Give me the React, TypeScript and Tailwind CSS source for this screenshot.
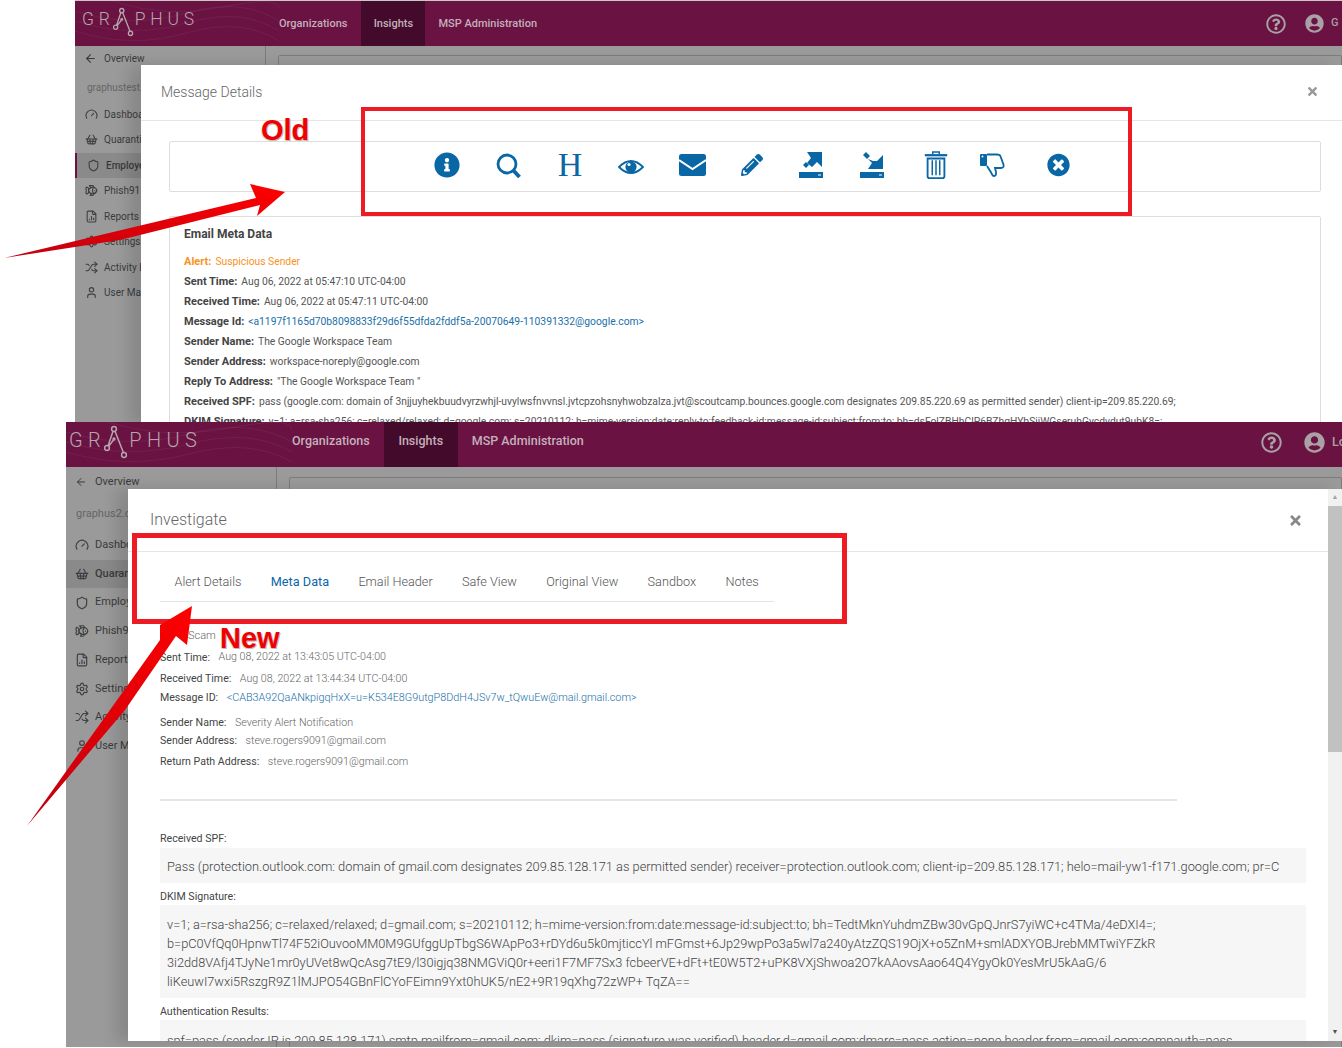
import React from "react";
import { ArrowLeft, Gauge, ShoppingBasket, Shield, Fish, FileChartColumn, Settings, Shuffle, User } from "lucide-react";
import { FaInfoCircle, FaPencilAlt, FaTimesCircle, FaTimes, FaUserCircle, FaRegQuestionCircle } from "react-icons/fa";

const blue = "#0a67a6";

function Waves() {
  return (
    <svg className="absolute inset-0 w-full h-full" viewBox="0 0 220 45" preserveAspectRatio="none" fill="none" stroke="#ffffff" strokeOpacity="0.06">
      <path d="M0 10 Q60 28 120 12 T220 20" />
      <path d="M0 20 Q60 38 120 22 T220 30" />
      <path d="M0 30 Q60 48 120 32 T220 40" />
      <path d="M40 0 Q100 18 160 6 T220 8" />
    </svg>
  );
}

function Logo({ big }: { big?: boolean }) {
  return (
    <div className={big ? "relative flex items-center text-[20px] tracking-[5.4px] text-[#b5a6ae] font-light" : "relative flex items-center text-[17.5px] tracking-[4.8px] text-[#b5a6ae] font-light"}>
      <span>GR</span>
      <svg viewBox="0 0 24 34" className={big ? "w-[24px] h-[34px] -ml-[2px] mr-[1px] mt-[4px]" : "w-[21px] h-[30px] -ml-[2px] mr-[1px] mt-[4px]"} fill="none" stroke="#b5a6ae" strokeWidth="1.5">
        <circle cx="10" cy="4" r="2.4" />
        <circle cx="3" cy="23" r="2.4" />
        <circle cx="20" cy="30" r="2.4" />
        <circle cx="10" cy="14" r="0.9" />
        <path d="M9 6.2 L4 21 M11 6.2 L19.4 27.6 M4.6 21.4 L9.5 15" />
      </svg>
      <span>PHUS</span>
    </div>
  );
}

function SideRow({ icon, label, active, rowClass }: { icon: React.ReactNode; label: string; active?: boolean; rowClass: string }) {
  return (
    <div className={`flex items-center pl-[9px] ${rowClass} ${active ? "bg-[#8a8a8a] font-medium" : ""}`}>
      <span className="w-[14px] flex justify-center text-[#3f3f3f]">{icon}</span>
      <span className="whitespace-nowrap">{label}</span>
    </div>
  );
}

function Meta({ label, children, orange }: { label: string; children: React.ReactNode; orange?: boolean }) {
  return (
    <div className={orange ? "h-5 flex items-center gap-[4px] whitespace-nowrap text-[#f7931e]" : "h-5 flex items-center gap-[4px] whitespace-nowrap text-[#555]"}>
      <b className={orange ? "font-bold text-[11px] text-[#f7931e]" : "font-bold text-[11px] text-[#444]"}>{label}</b>
      <span>{children}</span>
    </div>
  );
}

function NewMeta({ label, children, h, link }: { label: string; children: React.ReactNode; h: string; link?: boolean }) {
  return (
    <div className={`flex items-center whitespace-nowrap gap-[8.5px] ${h}`}>
      <span className="text-[#444] text-[10.6px]">{label}</span>
      <span className={link ? "text-[#1a6fa8] font-light text-[10.8px]" : "text-[#666] font-light text-[10.7px]"}>{children}</span>
    </div>
  );
}

function Search() {
  return (
    <svg viewBox="0 0 25 25" className="w-[25px] h-[25px] -ml-[2px]" fill="none" stroke={blue}>
      <circle cx="11" cy="11" r="9" strokeWidth="2.8" />
      <path d="M17 17 L23.5 24" strokeWidth="3.8" />
    </svg>
  );
}

function Eye() {
  return (
    <svg viewBox="0 0 26 18" className="w-[26px] h-[18px]">
      <path d="M1 9 Q13 -3 25 9 Q13 21 1 9 Z" fill="none" stroke={blue} strokeWidth="1.8" />
      <circle cx="13" cy="9" r="5.6" fill={blue} />
      <circle cx="11" cy="6.5" r="1.6" fill="#fff" />
    </svg>
  );
}

function Envelope() {
  return (
    <svg viewBox="0 0 27 22" className="w-[27px] h-[22px]">
      <rect width="27" height="22" rx="2.5" fill={blue} />
      <path d="M0 6 L13.5 15 L27 6" fill="none" stroke="#fff" strokeWidth="2" />
    </svg>
  );
}

function Upload() {
  return (
    <svg viewBox="0 0 24 26" className="w-[24px] h-[26px]" fill={blue}>
      <polygon points="8,0 23,0 23,15 18,10 13,15 8,11 12,6" />
      <polygon points="4,13 7,10 10,13 7,16" />
      <rect x="0" y="20" width="24" height="6" />
      <rect x="19" y="22.5" width="3" height="1" fill="#fff" />
    </svg>
  );
}

function Download() {
  return (
    <svg viewBox="0 0 24 26" className="w-[24px] h-[26px]" fill={blue}>
      <polygon points="23,3 23,17 8,17 12,11 8,7 13,9 17,9" />
      <polygon points="3,3 6,0 10,4 7,7" />
      <rect x="0" y="20" width="24" height="6" />
      <rect x="19" y="22.5" width="3" height="1" fill="#fff" />
    </svg>
  );
}

function Trash() {
  return (
    <svg viewBox="0 0 24 30" className="w-[24px] h-[28px]" fill="none" stroke={blue} strokeWidth="2">
      <path d="M8.5 3.5 V1.2 H15.5 V3.5" strokeWidth="1.6" />
      <path d="M0 4.5 H24" strokeWidth="2.4" />
      <path d="M3 8 V27 Q3 29 5 29 H19 Q21 29 21 27 V8 Z" />
      <path d="M8 10 V26 M12 10 V26 M16 10 V26" strokeWidth="1.6" />
    </svg>
  );
}

function ThumbDown() {
  return (
    <svg viewBox="0 0 25 24" className="w-[25px] h-[24px]">
      <rect x="0" y="1" width="7" height="12" rx="1" fill={blue} />
      <circle cx="2.5" cy="3.5" r="0.9" fill="#fff" />
      <path d="M7 1.5 H17 Q20 1.5 20.6 3.5 L23.6 12 Q24 15 21 15 H15 L16 19 Q16.4 23 14 23 Q12.4 23 11.4 20 L7 13" fill="none" stroke={blue} strokeWidth="1.8" />
    </svg>
  );
}

function OldToolbar() {
  return (
    <div className="mt-[20px] ml-[28px] w-[1152px] h-[51px] border border-[#ddd] rounded-[2px] flex items-center pl-[264px] pb-[3px] text-[#0a67a6]">
      <span className="w-[26px] flex justify-center"><FaInfoCircle className="w-[26px] h-[26px]" /></span>
      <span className="w-[26px] ml-[36px] flex justify-center"><Search /></span>
      <span className="w-[26px] ml-[35px] flex justify-center font-['Liberation_Serif',serif] text-[34px] leading-none">H</span>
      <span className="w-[26px] ml-[35px] flex justify-center mt-[3px]"><Eye /></span>
      <span className="w-[27px] ml-[35px] flex justify-center"><Envelope /></span>
      <span className="w-[24px] ml-[34px] flex justify-center"><FaPencilAlt className="w-[22px] h-[24px]" /></span>
      <span className="w-[24px] ml-[35px] flex justify-center"><Upload /></span>
      <span className="w-[24px] ml-[37px] flex justify-center"><Download /></span>
      <span className="w-[24px] ml-[40px] flex justify-center"><Trash /></span>
      <span className="w-[25px] ml-[32px] flex justify-center"><ThumbDown /></span>
      <span className="w-[24px] ml-[41px] flex justify-center"><FaTimesCircle className="w-[23px] h-[24px]" /></span>
    </div>
  );
}

function TopShot() {
  const row = "h-[25.5px] text-[10px] gap-[6px]";
  return (
    <section className="absolute left-[75px] top-[1px] w-[1267px] h-[421px] overflow-hidden bg-[#9a9a9a]">
      <header className="h-[45px] bg-[#6a1242] flex items-center text-[11px] text-[#c4b0bc] font-medium">
        <div className="relative w-[204px] pl-[7px] pb-[8px] h-full flex items-center"><Waves /><Logo /></div>
        <span className="pt-[1px]">Organizations</span>
        <span className="ml-[14px] w-[64px] h-full bg-[#430a2b] flex items-center justify-center pt-[1px]">Insights</span>
        <span className="ml-[13px] pt-[1px]">MSP Administration</span>
        <div className="ml-auto flex items-center text-[#aaa0a6]">
          <FaRegQuestionCircle className="w-[20px] h-[20px] mr-[19px]" />
          <FaUserCircle className="w-[19px] h-[19px] mr-[7px]" />
          <span className="w-[11px]">G</span>
        </div>
      </header>
      <div className="flex text-[#3a3a3a]">
        <aside className="w-[191px] h-[376px] border-r border-[#7c7c7c]">
          <div className="flex items-center pl-[9px] h-[25px] text-[10px]">
            <ArrowLeft className="w-[13px] h-[13px] mr-[7px]" /> Overview
          </div>
          <div className="pl-[12px] h-[30.5px] pt-[9px] text-[10px] text-[#666]">graphustest.com</div>
          <SideRow icon={<Gauge size={13} />} label="Dashboard" rowClass={row} />
          <SideRow icon={<ShoppingBasket size={13} />} label="Quarantine" rowClass={row} />
          <SideRow icon={<Shield size={13} />} label="Employee Awareness" active rowClass={`${row} border-l-2 border-[#6a1242] pl-[7px]`} />
          <SideRow icon={<Fish size={13} />} label="Phish911" rowClass={row} />
          <SideRow icon={<FileChartColumn size={13} />} label="Reports" rowClass={row} />
          <SideRow icon={<Settings size={13} />} label="Settings" rowClass={row} />
          <SideRow icon={<Shuffle size={13} />} label="Activity Log" rowClass={row} />
          <SideRow icon={<User size={13} />} label="User Management" rowClass={row} />
        </aside>
        <div className="flex-1 pl-[12px] pt-[9px]">
          <div className="h-full border border-[#7c7c7c] rounded-[2px]" />
        </div>
      </div>

      <div className="absolute left-[66px] top-[64px] right-0 h-[360px] bg-white shadow-[-12px_0_14px_rgba(0,0,0,0.12)]">
        <div className="h-[56px] border-b border-[#e5e5e5] flex items-center justify-between pl-[20px] pr-[24px]">
          <h2 className="text-[14px] text-[#666] font-light">Message Details</h2>
          <FaTimes className="w-[11px] h-[13px] text-[#999] -mt-[2px]" />
        </div>
        <OldToolbar />
        <div className="mt-[24px] ml-[28px] w-[1152px] h-[220px] border border-[#ddd] rounded-[2px] pl-[14px] pt-[3px] text-[10.3px]">
          <div className="h-[27px] flex items-center font-bold text-[12px] text-[#444]">Email Meta Data</div>
          <div className="h-[5px]" />
          <Meta label="Alert:" orange>Suspicious Sender</Meta>
          <Meta label="Sent Time:">Aug 06, 2022 at 05:47:10 UTC-04:00</Meta>
          <Meta label="Received Time:">Aug 06, 2022 at 05:47:11 UTC-04:00</Meta>
          <Meta label="Message Id:"><span className="text-[#1a6fa8]">&lt;a1197f1165d70b8098833f29d6f55dfda2fddf5a-20070649-110391332@google.com&gt;</span></Meta>
          <Meta label="Sender Name:">The Google Workspace Team</Meta>
          <Meta label="Sender Address:">workspace-noreply@google.com</Meta>
          <Meta label="Reply To Address:">"The Google Workspace Team "</Meta>
          <Meta label="Received SPF:">pass (google.com: domain of 3njjuyhekbuudvyrzwhjl-uvylwsfnvvnsl.jvtcpzohsnyhwobzalza.jvt@scoutcamp.bounces.google.com designates 209.85.220.69 as permitted sender) client-ip=209.85.220.69;</Meta>
          <Meta label="DKIM Signature:">v=1; a=rsa-sha256; c=relaxed/relaxed; d=google.com; s=20210112; h=mime-version:date:reply-to:feedback-id:message-id:subject:from:to; bh=dsFolZBHhClP6BZhgHYbSjjWGseruhGycdvdut9ubK8=;</Meta>
        </div>
      </div>
    </section>
  );
}

function Tabs() {
  const tabs = ["Alert Details", "Meta Data", "Email Header", "Safe View", "Original View", "Sandbox", "Notes"];
  return (
    <div className="ml-[32px] w-[614px] h-[50px] border-b border-[#e5e5e5] flex items-center pl-[14.5px] pt-[11px] gap-[29.3px] text-[12.7px] font-light text-[#555]">
      {tabs.map((t) => (
        <span key={t} className={t === "Meta Data" ? "text-[#0a67a6] font-normal" : ""}>{t}</span>
      ))}
    </div>
  );
}

function BottomShot() {
  const row = "h-[28.7px] text-[11px] gap-[6px]";
  const box = "w-[1146px] bg-[#f6f6f6] px-[7px] flex flex-col justify-center text-[#444] font-light whitespace-nowrap leading-[19px]";
  return (
    <section className="absolute left-[66px] top-[422px] w-[1276px] h-[625px] overflow-hidden bg-[#9a9a9a]">
      <header className="h-[45px] bg-[#6a1242] flex items-center text-[12.5px] font-medium text-[#c4b0bc]">
        <div className="relative w-[226px] pl-[3px] pb-[9px] h-full flex items-center"><Waves /><Logo big /></div>
        <span className="pb-[6px]">Organizations</span>
        <span className="ml-[14px] w-[74px] h-full bg-[#430a2b] flex items-center justify-center pb-[6px]">Insights</span>
        <span className="ml-[14px] pb-[6px]">MSP Administration</span>
        <div className="ml-auto flex items-center text-[#aaa0a6] pb-[5px]">
          <FaRegQuestionCircle className="w-[21px] h-[21px] mr-[22px]" />
          <FaUserCircle className="w-[21px] h-[21px] mr-[7px]" />
          <span className="w-[10px] overflow-hidden">Lo</span>
        </div>
      </header>
      <div className="flex text-[#3a3a3a]">
        <aside className="w-[211px] h-[580px] border-r border-[#7c7c7c]">
          <div className="flex items-center pl-[9px] h-[30px] text-[11px]">
            <ArrowLeft className="w-[12px] h-[12px] mr-[8px]" /> Overview
          </div>
          <div className="pl-[10px] h-[34px] pt-[9px] text-[11px] text-[#666]">graphus2.com</div>
          <SideRow icon={<Gauge size={14} />} label="Dashboard" rowClass={row} />
          <SideRow icon={<ShoppingBasket size={14} />} label="Quarantine" active rowClass={row} />
          <SideRow icon={<Shield size={14} />} label="Employee Awareness" rowClass={row} />
          <SideRow icon={<Fish size={14} />} label="Phish911" rowClass={row} />
          <SideRow icon={<FileChartColumn size={14} />} label="Reports" rowClass={row} />
          <SideRow icon={<Settings size={14} />} label="Settings" rowClass={row} />
          <SideRow icon={<Shuffle size={14} />} label="Activity Log" rowClass={row} />
          <SideRow icon={<User size={14} />} label="User Management" rowClass={row} />
        </aside>
        <div className="flex-1 pl-[12px] pt-[10px]">
          <div className="h-[600px] border border-[#7c7c7c] rounded-[2px]" />
        </div>
      </div>

      <div className="absolute left-[62px] top-[67px] right-0 h-[552px] bg-white shadow-[-12px_0_14px_rgba(0,0,0,0.12)] flex">
        <div className="flex-1 overflow-hidden">
          <div className="h-[63px] border-b border-[#e5e5e5] flex items-center justify-between pl-[22px] pr-[26px]">
            <h2 className="text-[16px] text-[#666] font-light">Investigate</h2>
            <FaTimes className="w-[13px] h-[15px] text-[#888]" />
          </div>
          <Tabs />
          <div className="ml-[32px]">
            <div className="h-[45px] pt-[27px] pl-[28px] text-[#666] font-light text-[11px] leading-[13px]">Scam</div>
            <NewMeta label="Sent Time:" h="h-[21px]">Aug 08, 2022 at 13:43:05 UTC-04:00</NewMeta>
            <NewMeta label="Received Time:" h="h-[22px]">Aug 08, 2022 at 13:44:34 UTC-04:00</NewMeta>
            <NewMeta label="Message ID:" h="h-[16px]" link>&lt;CAB3A92QaANkpigqHxX=u=K534E8G9utgP8DdH4JSv7w_tQwuEw@mail.gmail.com&gt;</NewMeta>
            <div className="h-[8px]" />
            <NewMeta label="Sender Name:" h="h-[18px]">Severity Alert Notification</NewMeta>
            <NewMeta label="Sender Address:" h="h-[18px]">steve.rogers9091@gmail.com</NewMeta>
            <NewMeta label="Return Path Address:" h="h-[24px]">steve.rogers9091@gmail.com</NewMeta>
            <div className="h-[25px]" />
            <div className="w-[1017px] h-[2px] bg-[#e5e5e5]" />
            <div className="h-[29px]" />
            <div className="h-[18px] flex items-center text-[10.6px] text-[#444]">Received SPF:</div>
            <div className={`${box} h-[35px] text-[12.83px] pt-[1px]`}>Pass (protection.outlook.com: domain of gmail.com designates 209.85.128.171 as permitted sender) receiver=protection.outlook.com; client-ip=209.85.128.171; helo=mail-yw1-f171.google.com; pr=C</div>
            <div className="h-[22px] flex items-end text-[10.6px] text-[#444]">DKIM Signature:</div>
            <div className={`${box} h-[93px] text-[12.78px] pt-[2px]`}>
              <div>v=1; a=rsa-sha256; c=relaxed/relaxed; d=gmail.com; s=20210112; h=mime-version:from:date:message-id:subject:to; bh=TedtMknYuhdmZBw30vGpQJnrS7yiWC+c4TMa/4eDXI4=;</div>
              <div>b=pC0VfQq0HpnwTl74F52iOuvooMM0M9GUfggUpTbgS6WApPo3+rDYd6u5k0mjticcYl mFGmst+6Jp29wpPo3a5wl7a240yAtzZQS19OjX+o5ZnM+smlADXYOBJrebMMTwiYFZkR</div>
              <div>3i2dd8VAfj4TJyNe1mr0yUVet8wQcAsg7tE9/l30igjq38NMGViQ0r+eeri1F7MF7Sx3 fcbeerVE+dFt+tE0W5T2+uPK8VXjShwoa2O7kAAovsAao64Q4YgyOk0YesMrU5kAaG/6</div>
              <div>liKeuwI7wxi5RszgR9Z1lMJPO54GBnFlCYoFEimn9Yxt0hUK5/nE2+9R19qXhg72zWP+ TqZA==</div>
            </div>
            <div className="h-[22px] flex items-end text-[10.6px] text-[#444]">Authentication Results:</div>
            <div className="w-[1146px] h-[40px] bg-[#f6f6f6] px-[7px] pt-[11px] text-[12.8px] text-[#444] font-light whitespace-nowrap">spf=pass (sender IP is 209.85.128.171) smtp.mailfrom=gmail.com; dkim=pass (signature was verified) header.d=gmail.com;dmarc=pass action=none header.from=gmail.com;compauth=pass</div>
          </div>
        </div>
        <div className="w-[14px] bg-[#f1f1f1] flex flex-col items-center">
          <span className="h-[17px] flex items-center text-[7px] text-[#a3a3a3]">▲</span>
          <div className="w-full h-[246px] bg-[#c1c1c1]" />
          <span className="mt-auto h-[17px] flex items-center text-[7px] text-[#505050]">▼</span>
        </div>
      </div>
    </section>
  );
}

export default function App() {
  return (
    <div className="relative w-[1342px] h-[1048px] overflow-hidden bg-white font-['Roboto',sans-serif]">
      <div className="absolute left-[75px] right-0 top-0 h-[1px] bg-[#c8c8c8]" />
      <TopShot />
      <BottomShot />

      {/* annotations laid over the two pasted screenshots */}
      <div className="absolute left-[361px] top-[107px] w-[771px] h-[109px] border-[4px] border-[#ed1c24]" />
      <div className="absolute left-[132px] top-[533px] w-[715px] h-[91px] border-[5px] border-[#ed1c24]" />
      <svg className="absolute left-0 top-0 pointer-events-none" width="1342" height="1048" viewBox="0 0 1342 1048">
        <defs>
          <linearGradient id="g1" x1="0" y1="1" x2="1" y2="0">
            <stop offset="0" stopColor="#c00010" />
            <stop offset="1" stopColor="#ff0000" />
          </linearGradient>
        </defs>
        <polygon points="4,258 256,198 250,184 285,192 257,216 260,205 120,240" fill="url(#g1)" />
        <polygon points="27,826 160,640 160,625 192,606 187,645 176,636 125,710" fill="url(#g1)" />
      </svg>
      <span className="absolute left-[261px] top-[110px] text-[29px] leading-[40px] font-bold text-[#f00000] [text-shadow:1px_1px_0_#bbb,-1px_1px_0_#ddd] font-['Liberation_Sans',sans-serif]">Old</span>
      <span className="absolute left-[220px] top-[618px] text-[29px] leading-[40px] font-bold text-[#f00000] [text-shadow:1px_1px_0_#bbb,-1px_1px_0_#ddd] font-['Liberation_Sans',sans-serif]">New</span>
    </div>
  );
}
